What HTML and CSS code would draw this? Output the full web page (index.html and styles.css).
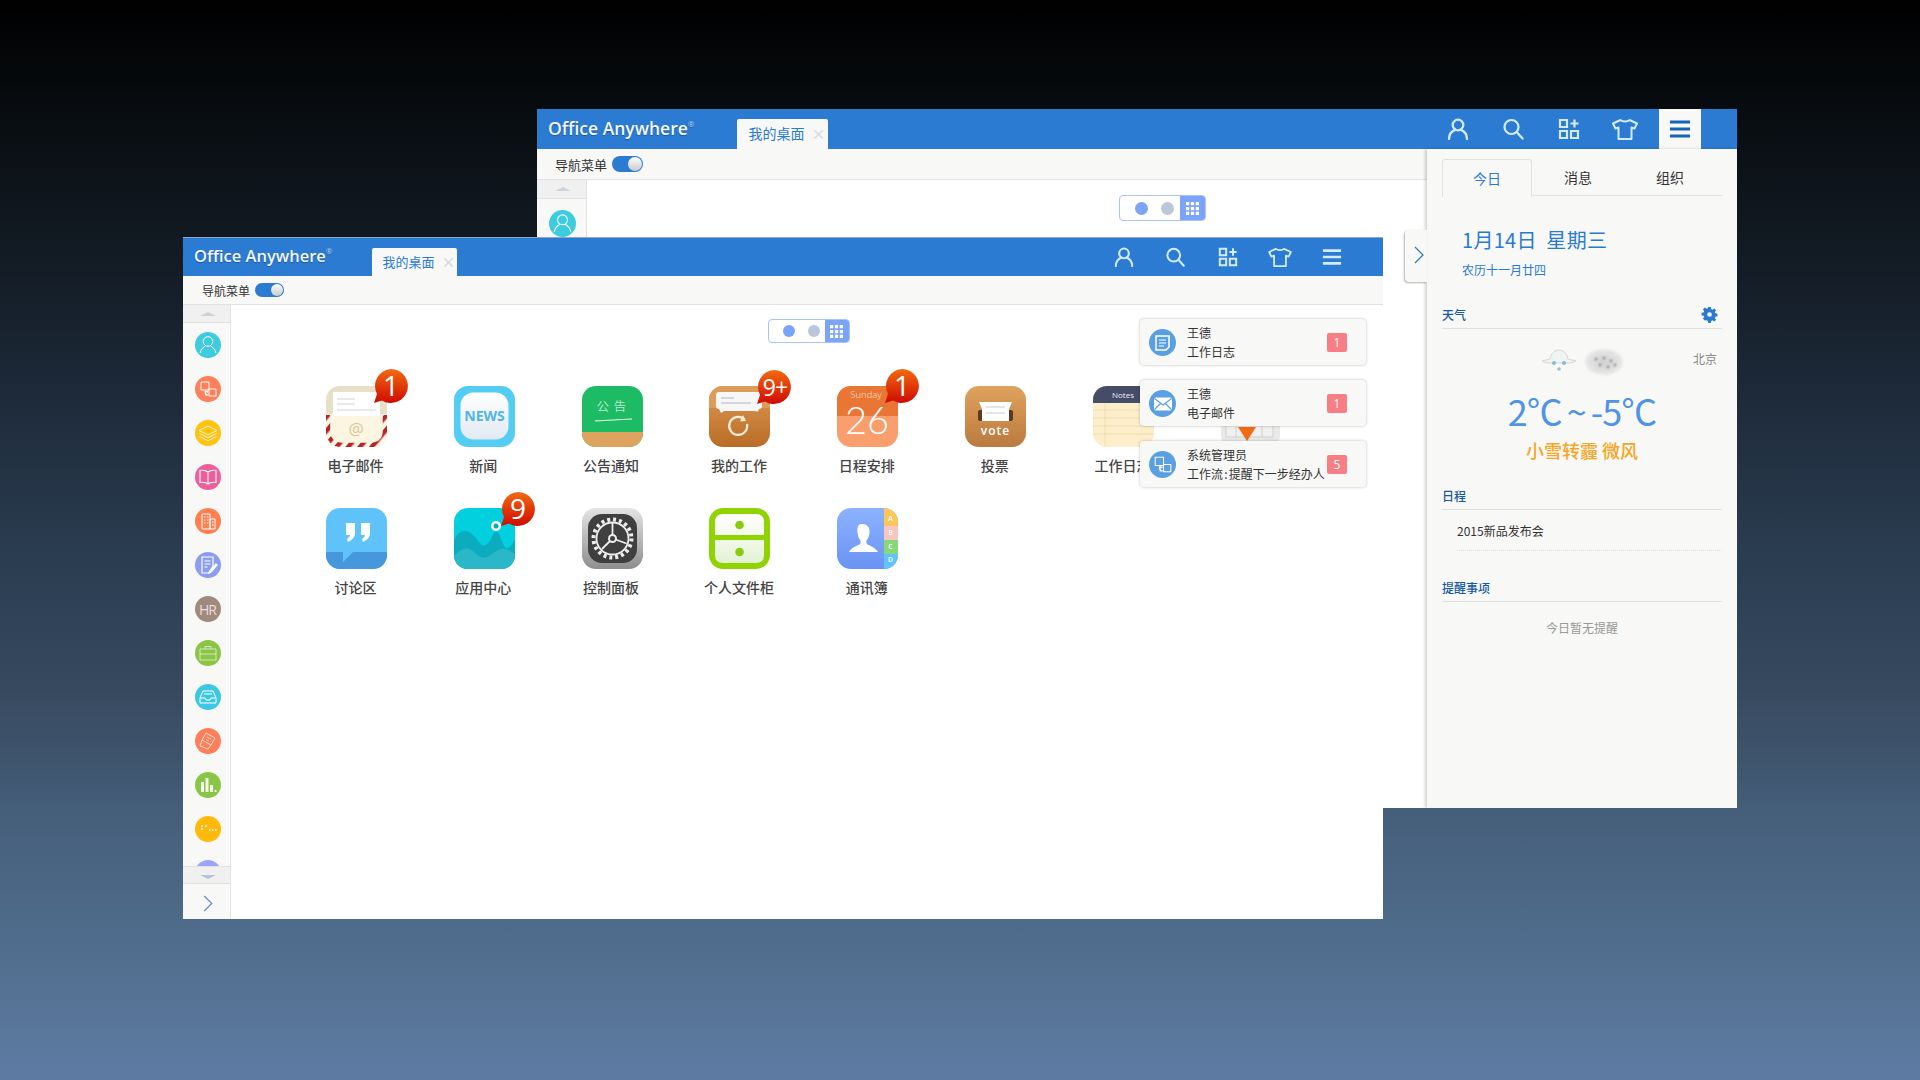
FILE: index.html
```html
<!DOCTYPE html>
<html lang="zh">
<head>
<meta charset="utf-8">
<title>Office Anywhere</title>
<link rel="stylesheet" href="styles.css">
</head>
<body>
<svg class="defs" width="0" height="0" aria-hidden="true">
  <defs>
    <linearGradient id="gBadge" x1="0" y1="0" x2="0" y2="1"><stop offset="0" stop-color="#f26a12"/><stop offset="1" stop-color="#cf0a00"/></linearGradient>
    <linearGradient id="gWork" x1="0" y1="0" x2="0" y2="1"><stop offset="0" stop-color="#dc9a58"/><stop offset="1" stop-color="#b96c24"/></linearGradient>
    <linearGradient id="gVote" x1="0" y1="0" x2="0" y2="1"><stop offset="0" stop-color="#dfa25e"/><stop offset="1" stop-color="#bb7a3e"/></linearGradient>
    <linearGradient id="gNews" x1="0" y1="0" x2="0" y2="1"><stop offset="0" stop-color="#ffffff"/><stop offset="1" stop-color="#e2e9f2"/></linearGradient>
    <linearGradient id="gCtl" x1="0" y1="0" x2="0" y2="1"><stop offset="0" stop-color="#e4e4e4"/><stop offset="1" stop-color="#8e8e8e"/></linearGradient>
    <linearGradient id="gCab" x1="0" y1="0" x2="0" y2="1"><stop offset="0" stop-color="#ffffff"/><stop offset="1" stop-color="#e3f1d3"/></linearGradient>
    <linearGradient id="gAddr" x1="0" y1="0" x2="0" y2="1"><stop offset="0" stop-color="#8cb2ff"/><stop offset="1" stop-color="#6993f3"/></linearGradient>
    <pattern id="pStripe" width="9" height="9" patternUnits="userSpaceOnUse" patternTransform="rotate(40)"><rect width="4.500" height="9" fill="#b5242b"/></pattern>
    <clipPath id="cIcon"><rect width="61" height="61" rx="14"/></clipPath>
    <symbol id="iUser" viewBox="0 0 22 22"><circle cx="11" cy="7" r="5.300" fill="none" stroke="currentColor" stroke-width="2.300"/><path d="M2 21c0-5 3-8 6.400-9.400M20 21c0-5-3-8-6.400-9.400" fill="none" stroke="currentColor" stroke-width="2.300" stroke-linecap="round"/></symbol>
    <symbol id="iSearch" viewBox="0 0 22 22"><circle cx="8.500" cy="9" r="7" fill="none" stroke="currentColor" stroke-width="2.200"/><path d="M13.600 14l6 6.600" fill="none" stroke="currentColor" stroke-width="2.200" stroke-linecap="round"/></symbol>
    <symbol id="iApps" viewBox="0 0 22 22"><path d="M2 2h7v7H2zM2 13h7v7H2zM13 13h7v7h-7z" fill="none" stroke="currentColor" stroke-width="2.200"/><path d="M16.500 1.500v8M12.500 5.500h8" fill="none" stroke="currentColor" stroke-width="2.200"/></symbol>
    <symbol id="iShirt" viewBox="0 0 26 22"><path d="M8.500 2C10 4 16 4 17.500 2L25 5.500 22.500 10.500 19.500 9.500V21H6.500V9.500L3.500 10.500 1 5.500z" fill="none" stroke="currentColor" stroke-width="2" stroke-linejoin="round"/></symbol>
    <symbol id="iMenu" viewBox="0 0 22 22"><path d="M1 2.500h20v3H1zM1 9.500h20v3H1zM1 16.500h20v3H1z" fill="currentColor"/></symbol>
    <symbol id="iWhiteUser" viewBox="0 0 26 26"><circle cx="13" cy="9.500" r="4.800" fill="none" stroke="#fff" stroke-width="1"/><path d="M5 21c1-4 4-6.500 5.600-7.200M21 21c-1-4-4-6.500-5.600-7.200" fill="none" stroke="#fff" stroke-width="1"/></symbol>
    <symbol id="iFlow" viewBox="0 0 26 26"><path d="M6 6h8v8H6zM14 13h7v7h-7z" fill="none" stroke="#fff" stroke-width="1"/><path d="M10 15l1 4h2M10 15l3 1" fill="none" stroke="#fff" stroke-width="1.500"/></symbol>
  </defs>
</svg>

<section class="win win-back">
  <header class="head">
    <div class="logo">Office Anywhere<sup>®</sup></div>
    <div class="tab">我的桌面<span class="tab-x">×</span></div>
    <nav class="head-btns">
      <span class="hbtn"><svg class="hicon"><use href="#iUser"/></svg></span>
      <span class="hbtn"><svg class="hicon"><use href="#iSearch"/></svg></span>
      <span class="hbtn"><svg class="hicon"><use href="#iApps"/></svg></span>
      <span class="hbtn"><svg class="hicon hicon-wide"><use href="#iShirt"/></svg></span>
      <span class="hbtn hbtn-on"><svg class="hicon"><use href="#iMenu"/></svg></span>
    </nav>
  </header>
  <div class="body">
    <div class="main">
      <div class="tools"><span>导航菜单</span><span class="toggle"><i></i></span></div>
      <div class="work">
        <aside class="side">
          <div class="scroll"><i class="tri"></i></div>
          <div class="side-list"><span class="dot c-cyan"><svg viewBox="0 0 26 26"><use href="#iWhiteUser"/></svg></span></div>
        </aside>
        <div class="desk">
          <div class="switch"><i class="sw-dot sw-a"></i><i class="sw-dot sw-b"></i><span class="sw-grid"><svg viewBox="0 0 12 12"><path d="M0 0h3v3H0zM4.500 0h3v3h-3zM9 0h3v3H9zM0 4.500h3v3H0zM4.500 4.500h3v3h-3zM9 4.500h3v3H9zM0 9h3v3H0zM4.500 9h3v3h-3zM9 9h3v3H9z" fill="#fff"/></svg></span></div>
        </div>
      </div>
    </div>
    <aside class="panel">
      <div class="expander"><svg viewBox="0 0 10 18"><path d="M1 1l8 8-8 8" fill="none" stroke="#2f7fb8" stroke-width="1.300"/></svg></div>
      <div class="ptabs"><span class="ptab ptab-on">今日</span><span class="ptab">消息</span><span class="ptab">组织</span></div>
      <div class="date">1月14日&nbsp;&nbsp;星期三</div>
      <div class="lunar">农历十一月廿四</div>
      <div class="sec sec-first"><span>天气</span>
        <svg class="gear" viewBox="0 0 16 16"><path d="M6.600 0h2.800l.4 2.200 1.400.6L13 1.500l2 2-1.300 1.800.6 1.400 2.200.4v2.800l-2.200.4-.6 1.400 1.300 1.800-2 2-1.800-1.300-1.400.6-.4 2.200H6.600l-.4-2.200-1.400-.6L3 14.500l-2-2 1.300-1.800-.6-1.400L-.5 9V6.200l2.200-.4.6-1.400L1 2.500l2-2 1.800 1.300 1.400-.6z" fill="#2a7bd0"/><circle cx="8" cy="8" r="2.500" fill="#f8f8f7"/></svg>
      </div>
      <div class="weather">
        <div class="w-row">
          <span></span>
          <div class="w-icons">
            <svg class="w-cloud" viewBox="0 0 36 28"><path d="M1 17c3-1 5-1 8-2 1-6 5-9 9-9s8 3 9 9c3 1 5 1 8 2-2 1.500-6 2-8 2H9c-2 0-6-.5-8-2z" fill="#f2f4f4" stroke="#d4d8d8"/><circle cx="13" cy="19" r="2" fill="#7cc0c8"/><circle cx="23" cy="19" r="2" fill="#7cc0c8"/><circle cx="18" cy="25" r="1.800" fill="#8ec8d0"/></svg>
            <div class="w-fog"><i></i><i></i><i></i><i></i><i></i><i></i></div>
          </div>
          <span class="city">北京</span>
        </div>
        <div class="temp">2℃<span class="tilde">~</span>-5℃</div>
        <div class="cond">小雪转霾 微风</div>
      </div>
      <div class="sec"><span>日程</span></div>
      <div class="event">2015新品发布会</div>
      <div class="sec sec-rem"><span>提醒事项</span></div>
      <div class="none">今日暂无提醒</div>
    </aside>
  </div>
</section>

<section class="win win-front">
  <header class="head">
    <div class="logo">Office Anywhere<sup>®</sup></div>
    <div class="tab">我的桌面<span class="tab-x">×</span></div>
    <nav class="head-btns">
      <span class="hbtn"><svg class="hicon"><use href="#iUser"/></svg></span>
      <span class="hbtn"><svg class="hicon"><use href="#iSearch"/></svg></span>
      <span class="hbtn"><svg class="hicon"><use href="#iApps"/></svg></span>
      <span class="hbtn"><svg class="hicon hicon-wide"><use href="#iShirt"/></svg></span>
      <span class="hbtn"><svg class="hicon"><use href="#iMenu"/></svg></span>
    </nav>
  </header>
  <div class="tools"><span>导航菜单</span><span class="toggle"><i></i></span></div>
  <div class="work">
    <aside class="side">
      <div class="scroll"><i class="tri"></i></div>
      <div class="side-list">
        <span class="dot c-cyan"><svg viewBox="0 0 26 26"><use href="#iWhiteUser"/></svg></span>
        <span class="dot c-coral"><svg viewBox="0 0 26 26"><use href="#iFlow"/></svg></span>
        <span class="dot c-gold"><svg viewBox="0 0 26 26"><path d="M13 6l9 4.500-9 4.500-9-4.500zM4.500 13.500l8.500 4.300 8.500-4.300M4.500 16.500l8.500 4.300 8.500-4.300" fill="none" stroke="#fff" stroke-width="1" opacity=".8"/></svg></span>
        <span class="dot c-pink"><svg viewBox="0 0 26 26"><path d="M13 8c-2-1.500-5-2-8-1.500v12c3-.5 6 0 8 1.500 2-1.500 5-2 8-1.500v-12c-3-.5-6 0-8 1.500zM13 8v12" fill="none" stroke="#fff" stroke-width="1.100"/></svg></span>
        <span class="dot c-orange"><svg viewBox="0 0 26 26"><path d="M7 6h8v15H7zM15 11h5v10h-5zM9 9h1.500M12 9h1.500M9 12h1.500M12 12h1.500M9 15h1.500M12 15h1.500M17 14h1.500M17 17h1.500" fill="none" stroke="#fff" stroke-width="1"/></svg></span>
        <span class="dot c-peri"><svg viewBox="0 0 26 26"><path d="M7 5h11v9l-4 7H7zM9.500 9h6M9.500 12h6M9.500 15h3" fill="none" stroke="#fff" stroke-width="1.200"/><path d="M21 11l2 2-7 8-3 1 1-3z" fill="#fff"/></svg></span>
        <span class="dot c-brown"><span class="dot-txt">HR</span></span>
        <span class="dot c-green"><svg viewBox="0 0 26 26"><path d="M5 9h16v11H5zM10 9V6.500h6V9M5 14h16" fill="none" stroke="#fff" stroke-width=".9" opacity=".7"/></svg></span>
        <span class="dot c-sky"><svg viewBox="0 0 26 26"><path d="M5 14l3-7h10l3 7v5H5zM5 14h5l1 2h4l1-2h5M9 10h8" fill="none" stroke="#fff" stroke-width="1"/></svg></span>
        <span class="dot c-coral"><svg viewBox="0 0 26 26"><path d="M11 5l9 5-4 7-9-5zM7 12l-2 6 8 3 3-4M12 9l4 2M11 11.500l3 1.700" fill="none" stroke="#fff" stroke-width="1" opacity=".7"/></svg></span>
        <span class="dot c-green"><svg viewBox="0 0 26 26"><path d="M6 10h3v10H6zM10.500 6h3v14h-3zM15 13h3v7h-3zM19.500 18h2v2h-2z" fill="#fff" opacity=".9"/></svg></span>
        <span class="dot c-amber"><svg viewBox="0 0 26 26"><path d="M6 10h2M10 10h2M6 13h2M14 14h1.500M17 14h1.500M20 14h1.500" fill="none" stroke="#fff" stroke-width="1.500"/></svg></span>
        <span class="dot c-lilac"></span>
      </div>
      <div class="scroll scroll-down"><i class="tri tri-down"></i></div>
      <div class="side-more"><svg viewBox="0 0 10 18"><path d="M1 1l8 8-8 8" fill="none" stroke="#5f8fd8" stroke-width="1.300"/></svg></div>
    </aside>
    <div class="desk">
      <div class="switch"><i class="sw-dot sw-a"></i><i class="sw-dot sw-b"></i><span class="sw-grid"><svg viewBox="0 0 12 12"><path d="M0 0h3v3H0zM4.500 0h3v3h-3zM9 0h3v3H9zM0 4.500h3v3H0zM4.500 4.500h3v3h-3zM9 4.500h3v3H9zM0 9h3v3H0zM4.500 9h3v3h-3zM9 9h3v3H9z" fill="#fff"/></svg></span></div>
      <div class="apps">
        <div class="app">
          <svg class="app-ic" viewBox="0 0 61 61"><g clip-path="url(#cIcon)"><rect width="61" height="61" fill="#e8dfc8"/><rect y="28" width="61" height="33" fill="#fbf5e2"/><rect x="7" y="6" width="47" height="24" fill="#fff"/><path d="M11 13h18M11 18h18M11 24h39" stroke="#dfe2e8" stroke-width="1.300"/><path d="M2 29v16c0 8.500 5.500 14 14 14h29c8.500 0 14-5.500 14-14V29" fill="none" stroke="url(#pStripe)" stroke-width="4.500"/></g><text x="30" y="49" class="t-at">@</text></svg>
          <svg class="badge" viewBox="0 0 40 40"><path d="M20 2a17 17 0 1 1-9 31.500L3 36l3-9A17 17 0 0 1 20 2z" fill="url(#gBadge)"/><text x="20" y="29" class="t-badge">1</text></svg>
          <div class="app-name">电子邮件</div>
        </div>
        <div class="app">
          <svg class="app-ic" viewBox="0 0 61 61"><rect width="61" height="61" rx="14" fill="#54cdf3"/><rect x="6.500" y="6.500" width="48" height="47" rx="13" fill="url(#gNews)"/><text x="30.500" y="35" class="t-news">NEWS</text></svg>
          <div class="app-name">新闻</div>
        </div>
        <div class="app">
          <svg class="app-ic" viewBox="0 0 61 61"><g clip-path="url(#cIcon)"><rect width="61" height="61" fill="#1dbc64"/><rect y="46" width="61" height="15" fill="#dda35f"/></g><text x="30" y="25" class="t-note">公 告</text><path d="M13 35q18-1 37-2" stroke="#eafff2" stroke-width="1" fill="none"/></svg>
          <div class="app-name">公告通知</div>
        </div>
        <div class="app">
          <svg class="app-ic" viewBox="0 0 61 61"><g clip-path="url(#cIcon)"><rect width="61" height="61" fill="url(#gWork)"/><rect y="0" width="61" height="22" fill="#dc9c5a"/></g><path d="M10 6h40q3 0 3 3v11q0 3-3 3l-1 2.500-4-.5H15l-3 2-2-4q-3 0-3-3V9q0-3 3-3z" fill="#f7f7f7"/><path d="M12 12h13M12 17h30" stroke="#c9ccd2" stroke-width="1.500"/><path d="M38 38a9 9 0 1 1-3-5" fill="none" stroke="#fbeedd" stroke-width="2.200"/><path d="M34 29l3 6-6 .5z" fill="#fbeedd"/></svg>
          <svg class="badge" viewBox="0 0 40 40"><path d="M20 3a17 17 0 1 1-9 31.500L3 37l3-9A17 17 0 0 1 20 3z" fill="url(#gBadge)"/><text x="21" y="29" class="t-badge t-badge-s">9+</text></svg>
          <div class="app-name">我的工作</div>
        </div>
        <div class="app">
          <svg class="app-ic" viewBox="0 0 61 61"><g clip-path="url(#cIcon)"><rect width="61" height="61" fill="#fb9e6d"/><rect width="61" height="30" fill="#ea7635"/></g><text x="29" y="12" class="t-sun">Sunday</text><text x="30" y="48" class="t-cal">26</text></svg>
          <svg class="badge" viewBox="0 0 40 40"><path d="M20 2a17 17 0 1 1-9 31.500L3 36l3-9A17 17 0 0 1 20 2z" fill="url(#gBadge)"/><text x="20" y="29" class="t-badge">1</text></svg>
          <div class="app-name">日程安排</div>
        </div>
        <div class="app">
          <svg class="app-ic" viewBox="0 0 61 61"><rect width="61" height="61" rx="14" fill="url(#gVote)"/><rect x="13" y="24" width="35" height="11" rx="2" fill="#5a3a20"/><path d="M14 16h33l-3 7v12H17V23z" fill="#fff"/><path d="M21 21h19M21 27h19" stroke="#c9ccd4" stroke-width="1.200"/><text x="30.500" y="49" class="t-vote">vote</text></svg>
          <div class="app-name">投票</div>
        </div>
        <div class="app">
          <svg class="app-ic" viewBox="0 0 61 61"><g clip-path="url(#cIcon)"><rect width="61" height="61" fill="#fdeecb"/><rect width="61" height="17" fill="#444c66"/><path d="M0 24h61M0 32h61M0 40h61M0 48h61M12 17v44" stroke="#eedcae" stroke-width="1"/></g><text x="30" y="11.500" class="t-notes">Notes</text></svg>
          <div class="app-name">工作日志</div>
        </div>
        <div class="app">
          <svg class="app-ic" viewBox="0 0 61 61"><rect width="59" height="61" rx="12" fill="#e9e9e9"/><path d="M5 30h47v21H5zM15 30v21M41 30v21" fill="#f0f0f0" stroke="#cfcfcf"/><path d="M17 41h18l-9 14z" fill="#f26a12"/></svg>
        </div>
        <div class="app">
          <svg class="app-ic" viewBox="0 0 61 61"><g clip-path="url(#cIcon)"><rect width="61" height="61" fill="#5fc3f9"/><path d="M0 44h17v10l10-10h34v17H0z" fill="#4697dc"/></g><path d="M20 15h9v10q0 6-7 9l-1-3q3-1.500 3-4h-4zM35 15h9v10q0 6-7 9l-1-3q3-1.500 3-4h-4z" fill="#fff"/></svg>
          <div class="app-name">讨论区</div>
        </div>
        <div class="app">
          <svg class="app-ic" viewBox="0 0 61 61"><g clip-path="url(#cIcon)"><rect width="61" height="61" fill="#03d0de"/><path d="M0 32C5 22 13 20 20 28S28 40 33 36 39 22 43 24 49 42 54 40 60 30 61 32V61H0z" fill="#0cacbf"/><path d="M0 48C8 40 14 38 20 44S30 52 38 46 50 38 61 46V61H0z" fill="#2ab7c8"/></g><circle cx="42" cy="18" r="5" fill="#fff"/><circle cx="42" cy="18" r="2.500" fill="#0aa9b8"/></svg>
          <svg class="badge" viewBox="0 0 40 40"><path d="M20 3a17 17 0 1 1-9 31.500L3 37l3-9A17 17 0 0 1 20 3z" fill="url(#gBadge)"/><text x="20" y="30" class="t-badge">9</text></svg>
          <div class="app-name">应用中心</div>
        </div>
        <div class="app">
          <svg class="app-ic" viewBox="0 0 61 61"><rect width="61" height="61" rx="14" fill="url(#gCtl)"/><rect x="6" y="6" width="49" height="49" rx="14" fill="#3f3f3f"/><circle cx="30.500" cy="30.500" r="19" fill="none" stroke="#eee" stroke-width="4" stroke-dasharray="3 2.970"/><circle cx="30.500" cy="30.500" r="16" fill="none" stroke="#eee" stroke-width="1.800"/><circle cx="30.500" cy="30.500" r="3.500" fill="none" stroke="#eee" stroke-width="2"/><path d="M30.500 27V15M33.500 31.500l11 4M28 33l-8 8" stroke="#eee" stroke-width="1.800"/></svg>
          <div class="app-name">控制面板</div>
        </div>
        <div class="app">
          <svg class="app-ic" viewBox="0 0 61 61"><rect width="61" height="61" rx="14" fill="#8fd400"/><path d="M14 6h33q8 0 8 8v13H6V14q0-8 8-8zM6 32h49v15q0 8-8 8H14q-8 0-8-8z" fill="url(#gCab)"/><circle cx="30.500" cy="17" r="4.300" fill="#88cc10"/><circle cx="30.500" cy="44" r="4.300" fill="#88cc10"/></svg>
          <div class="app-name">个人文件柜</div>
        </div>
        <div class="app">
          <svg class="app-ic" viewBox="0 0 61 61"><g clip-path="url(#cIcon)"><rect width="61" height="61" fill="url(#gAddr)"/><rect x="47" width="14" height="18" fill="#fbc65a"/><rect x="47" y="18" width="14" height="14" fill="#f6c6bf"/><rect x="47" y="32" width="14" height="14" fill="#86d87a"/><rect x="47" y="46" width="14" height="15" fill="#5fc4fa"/></g><path d="M24 16c5 0 8 3 7.500 9-.3 3-1.500 6-3 7.500v3c1 2 9 3 11.500 8.500H11c2.500-5.500 10.500-6.500 11.500-8.500v-3c-1.500-1.500-2.700-4.500-3-7.500C19 19 20 16 24 16z" fill="#fff" transform="translate(1 0)"/><text x="53.500" y="13" class="t-tab">A</text><text x="53.500" y="27" class="t-tab">B</text><text x="53.500" y="41" class="t-tab">C</text><text x="53.500" y="54" class="t-tab">D</text></svg>
          <div class="app-name">通讯簿</div>
        </div>
      </div>
      <div class="cards">
        <div class="card"><span class="card-ic"><svg viewBox="0 0 27 27"><path d="M7 7h13v11l-3 3H7z" fill="none" stroke="#fff" stroke-width="1.500"/><path d="M10 11h7M10 14h7M10 17h5" stroke="#fff" stroke-width="1.200"/></svg></span><div class="card-txt"><div>王德</div><div>工作日志</div></div><span class="card-num">1</span></div>
        <div class="card"><span class="card-ic"><svg viewBox="0 0 27 27"><rect x="5" y="7.500" width="18" height="13" rx="2" fill="#fff"/><path d="M5.500 8.500l8.500 6.500 8.500-6.500M5.500 19.500l6-6M22.500 19.500l-6-6" fill="none" stroke="#5b9fe3" stroke-width="1.200"/></svg></span><div class="card-txt"><div>王德</div><div>电子邮件</div></div><span class="card-num">1</span></div>
        <div class="card"><span class="card-ic"><svg viewBox="0 0 26 26"><use href="#iFlow"/></svg></span><div class="card-txt"><div>系统管理员</div><div>工作流 : 提醒下一步经办人</div></div><span class="card-num">5</span></div>
      </div>
    </div>
  </div>
</section>
</body>
</html>
```
FILE: styles.css
```css
* { box-sizing: border-box; }
html, body { margin: 0; height: 100%; }
body {
  position: relative;
  width: 1920px;
  height: 1080px;
  overflow: hidden;
  font-family: "Noto Sans CJK SC", "Open Sans", sans-serif;
  color: #333;
  background: linear-gradient(#000 0, #0a0f14 138px, #141d27 275px, #1f2c3c 413px, #2a3c50 551px, #37495f 689px, #46607c 826px, #526f90 964px, #5e7ca3 1080px);
}
.defs { position: absolute; }
i { display: block; }

.win { position: absolute; display: flex; flex-direction: column; background: #fff; overflow: hidden; }
.win-back { left: 537px; top: 109px; width: 1200px; height: 699px; }
.win-front { left: 183px; top: 238px; width: 1200px; height: 681px; box-shadow: 0 -1px 0 #8fa6c4; }

/* header */
.head { display: flex; align-items: flex-end; flex: none; background: #2b7bd3; }
.win-front .head { height: 38px; padding-left: 11px; }
.win-back .head { height: 40px; padding-left: 11px; }
.logo { font-family: "Open Sans", sans-serif; font-weight: 600; color: #f2f7fc; align-self: center; white-space: nowrap; text-shadow: 0 1px 1px rgba(0,0,0,.3); }
.logo sup { font-size: 8px; font-weight: 400; vertical-align: 8px; line-height: 0; color: #bcd6f2; }
.win-front .logo { font-size: 16.500px; width: 178px; margin-top: -4px; }
.win-back .logo { font-size: 17.500px; width: 189px; margin-top: -3px; }
.tab { display: flex; align-items: center; justify-content: center; background: #f8f8f7; border-radius: 2px 2px 0 0; color: #2a7bd0; font-size: 13px; padding: 0 0 2px 9px; }
.win-front .tab { width: 85px; height: 28px; }
.win-back .tab { width: 91px; height: 30px; font-size: 14px; }
.tab-x { color: #d6dbe0; font-size: 14px; font-weight: 700; margin-left: 7px; }
.head-btns { display: flex; margin-left: auto; align-self: stretch; }
.win-front .head-btns { gap: 10px; padding-right: 30px; }
.win-back .head-btns { gap: 13.500px; padding-right: 36px; }
.hbtn { width: 42px; display: flex; align-items: center; justify-content: center; color: #d3ebfa; }
.hbtn-on { background: #f8f8f7; color: #1463b8; }
.hicon { display: block; }
.win-front .hicon { width: 20px; height: 20px; }
.win-back .hicon { width: 22px; height: 22px; }
.win-front .hicon-wide { width: 24px; }
.win-back .hicon-wide { width: 26px; }

/* toolbar */
.tools { display: flex; align-items: center; flex: none; background: #f8f8f7; border-bottom: 1px solid #e2e2e2; color: #333; }
.win-front .tools { height: 29px; padding-left: 19px; gap: 5px; font-size: 12px; }
.win-back .tools { height: 31px; padding-left: 18px; gap: 5px; font-size: 13px; }
.toggle { display: flex; justify-content: flex-end; align-items: center; background: #2b7bd3; border-radius: 8px; padding: 1px; }
.win-front .toggle { width: 29px; height: 14px; }
.win-back .toggle { width: 31px; height: 16px; }
.toggle i { height: 100%; aspect-ratio: 1; border-radius: 50%; background: linear-gradient(#fff, #c9c9c9); }

/* layout */
.body { display: flex; flex: 1; min-height: 0; }
.main { flex: 1; min-width: 0; display: flex; flex-direction: column; }
.work { flex: 1; display: flex; min-height: 0; }

/* sidebar */
.side { flex: none; display: flex; flex-direction: column; align-items: stretch; background: #f8f8f7; border-right: 1px solid #e2e2e2; }
.win-front .side { width: 48px; }
.win-back .side { width: 50px; }
.scroll { flex: none; height: 18px; padding-left: 2px; background: #f0f0f0; border-bottom: 1px solid #e2e2e2; display: flex; align-items: center; justify-content: center; }
.win-back .scroll { height: 19px; }
.scroll-down { height: 18px; border-top: 1px solid #e2e2e2; border-bottom: 1px solid #e2e2e2; }
.tri { width: 0; height: 0; border-left: 8px solid transparent; border-right: 8px solid transparent; border-bottom: 4px solid #cdd3dc; }
.tri-down { border-bottom: 0; border-top: 4px solid #b9c1d6; margin-top: 3px; }
.side-list { flex: 1; min-height: 0; overflow: hidden; display: flex; flex-direction: column; align-items: center; padding-left: 2px; }
.win-back .side-list { padding-top: 11px; }
.dot { flex: none; width: 26px; height: 26px; border-radius: 50%; margin: 9px 0; display: flex; align-items: center; justify-content: center; }
.win-back .dot { width: 27px; height: 27px; margin: 0; }
.dot svg { width: 100%; height: 100%; display: block; }
.dot-txt { color: #eadfd8; font-family: "Open Sans", sans-serif; font-size: 14px; letter-spacing: -1px; }
.c-cyan { background: #3fcbdf; }
.c-coral { background: #ff7f5a; }
.c-gold { background: #ffc20e; }
.c-pink { background: #ee5e9a; }
.c-orange { background: #ff7f50; }
.c-peri { background: #8a9df2; }
.c-brown { background: #a08a7f; }
.c-green { background: #8bc545; }
.c-sky { background: #3cc8e4; }
.c-amber { background: #ffb90a; }
.c-lilac { background: #9aa7f8; }
.side-more { flex: none; height: 35px; padding: 3px 0 0 3px; display: flex; align-items: center; justify-content: center; }
.side-more svg { width: 10px; height: 17px; display: block; }

/* desk */
.desk { flex: 1; min-width: 0; position: relative; display: flex; flex-direction: column; background: #fff; }
.switch { flex: none; align-self: center; display: flex; align-items: center; border: 1.500px solid #a9c4f8; border-radius: 4px; background: #fff; overflow: hidden; }
.win-front .switch { width: 82px; height: 24px; margin: 14px 0 0 3px; padding-left: 14px; }
.win-back .switch { width: 87px; height: 26px; margin: 15px 0 0 310px; padding-left: 15px; }
.sw-dot { width: 12px; height: 12px; border-radius: 50%; }
.win-back .sw-dot { width: 13px; height: 13px; }
.sw-a { background: #7ba3f7; }
.sw-b { background: #b9c7d8; margin-left: 13px; }
.sw-grid { margin-left: auto; align-self: stretch; background: #7ba3f7; display: flex; align-items: center; justify-content: center; }
.win-front .sw-grid { width: 24px; }
.win-back .sw-grid { width: 25px; }
.sw-grid svg { width: 13px; height: 13px; display: block; }

/* apps */
.apps { display: grid; grid-template-columns: repeat(8, 127.85px); grid-auto-rows: 122px; padding-left: 61.500px; margin-top: 43px; }
.app { position: relative; display: flex; flex-direction: column; align-items: center; }
.app-ic { width: 61px; height: 61px; display: block; flex: none; }
.app-name { font-size: 14px; font-weight: 500; line-height: 20px; margin: 8px 0 0 -2px; color: #444; white-space: nowrap; }
.badge { position: absolute; width: 40px; height: 40px; left: 78px; top: -19px; }
.t-badge { font-family: "Open Sans", sans-serif; font-size: 28px; fill: #fff; text-anchor: middle; }
.t-badge-s { font-size: 23px; letter-spacing: -1px; }
.t-at { font-family: "Open Sans", sans-serif; font-size: 17px; fill: #d9c794; text-anchor: middle; }
.t-news { font-family: "Open Sans", sans-serif; font-size: 14px; font-weight: 700; fill: #4fb6e6; text-anchor: middle; }
.t-note { font-size: 12.500px; font-weight: 300; fill: #eafff2; text-anchor: middle; letter-spacing: 1px; }
.t-sun { font-family: "Open Sans", sans-serif; font-size: 9.500px; font-weight: 300; fill: #ffe3d0; text-anchor: middle; }
.t-cal { font-family: "Lato", sans-serif; font-weight: 300; font-size: 38px; fill: #fff; text-anchor: middle; }
.t-vote { font-family: "Open Sans", sans-serif; font-size: 12px; font-weight: 600; fill: #fff; text-anchor: middle; letter-spacing: 1px; }
.t-notes { font-family: "Open Sans", sans-serif; font-size: 8px; fill: #eef; text-anchor: middle; }
.t-tab { font-family: "Open Sans", sans-serif; font-size: 7px; font-weight: 700; fill: #fff; text-anchor: middle; opacity: .85; }

/* cards */
.cards { position: absolute; left: 909px; top: 14px; width: 226px; display: flex; flex-direction: column; gap: 15px; }
.card { height: 46px; display: flex; align-items: center; padding: 0 19px 0 9px; background: #f8f8f7; border-radius: 4px; box-shadow: 0 0 3px rgba(0,0,0,.28); }
.card-ic { flex: none; width: 27px; height: 27px; border-radius: 50%; background: #5b9fe3; }
.card-ic svg { width: 27px; height: 27px; display: block; }
.card-txt { flex: 1; min-width: 0; margin-left: 11px; font-size: 12px; line-height: 20px; color: #333; white-space: nowrap; word-spacing: -1.500px; }
.card-txt div:first-child { padding-top: 1px; line-height: 19px; }
.card-num { flex: none; width: 20px; height: 19px; border-radius: 2px; background: #f77e85; color: #fff; font-size: 12px; line-height: 19px; text-align: center; font-family: "Open Sans", sans-serif; }

/* panel */
.panel { position: relative; flex: none; width: 310px; padding: 10px 15px 0; background: #f8f8f7; box-shadow: -2px 0 3px rgba(0,0,0,.18); }
.expander { position: absolute; left: -22px; top: 81px; width: 22px; height: 52px; padding: 0 0 2px 6px; background: #f8f8f7; border-radius: 4px 0 0 4px; box-shadow: -1px 1px 2px rgba(0,0,0,.3); display: flex; align-items: center; justify-content: center; }
.expander svg { width: 10px; height: 18px; display: block; }
.ptabs { display: flex; height: 37px; border-bottom: 1px solid #e2e2e2; }
.ptab { width: 92px; display: flex; align-items: center; justify-content: center; font-size: 14px; color: #333; }
.ptab-on { width: 90px; color: #2a7bd0; height: 38px; padding-bottom: 2px; background: #f8f8f7; border: 1px solid #e2e2e2; border-bottom: 0; border-radius: 3px 3px 0 0; }
.date { font-size: 20px; line-height: 28px; color: #2a7bd0; margin: 30px 0 0 20px; letter-spacing: .3px; }
.lunar { font-size: 12px; line-height: 18px; color: #2a7bd0; margin: 7px 0 0 20px; }
.sec { display: flex; align-items: center; justify-content: space-between; height: 24px; padding: 0 5px 5px 0; border-bottom: 1px solid #dfe0e4; font-size: 12px; font-weight: 500; color: #15599f; }
.sec-first { margin-top: 26px; }
.sec-rem { margin-top: 27px; }
.gear { width: 15px; height: 15px; display: block; overflow: visible; }
.weather { height: 157px; }
.w-row { display: grid; grid-template-columns: 1fr auto 1fr; align-items: center; height: 58px; }
.w-icons { display: flex; align-items: center; gap: 8px; }
.w-cloud { width: 36px; height: 28px; display: block; }
.w-fog { position: relative; width: 38px; height: 26px; border-radius: 50%; background: radial-gradient(#d0d0d0, #e4e4e4 60%, rgba(240,240,240,0)); filter: blur(1px); margin-top: 8px; }
.w-fog i { position: absolute; width: 1.500px; height: 1.500px; background: #555; border-radius: 50%; }
.w-fog i:nth-child(1) { left: 10px; top: 9px; }
.w-fog i:nth-child(2) { left: 18px; top: 8px; }
.w-fog i:nth-child(3) { left: 25px; top: 11px; }
.w-fog i:nth-child(4) { left: 14px; top: 15px; }
.w-fog i:nth-child(5) { left: 22px; top: 17px; }
.w-fog i:nth-child(6) { left: 29px; top: 15px; }
.city { justify-self: end; font-size: 12px; color: #888; padding-right: 5px; }
.temp { font-size: 36px; font-weight: 400; line-height: 40px; margin-top: 3px; text-align: center; color: #4f93e6; white-space: nowrap; letter-spacing: -1px; }
.tilde { margin: 0 5px; }
.cond { font-size: 18px; font-weight: 500; line-height: 26px; margin-top: 7px; text-align: center; color: #f5a623; }
.event { height: 41px; margin-left: 15px; display: flex; align-items: center; font-size: 12px; color: #333; border-bottom: 1px dotted #dfe0e4; }
.none { font-size: 12px; line-height: 18px; margin-top: 17px; text-align: center; color: #999; }
```
